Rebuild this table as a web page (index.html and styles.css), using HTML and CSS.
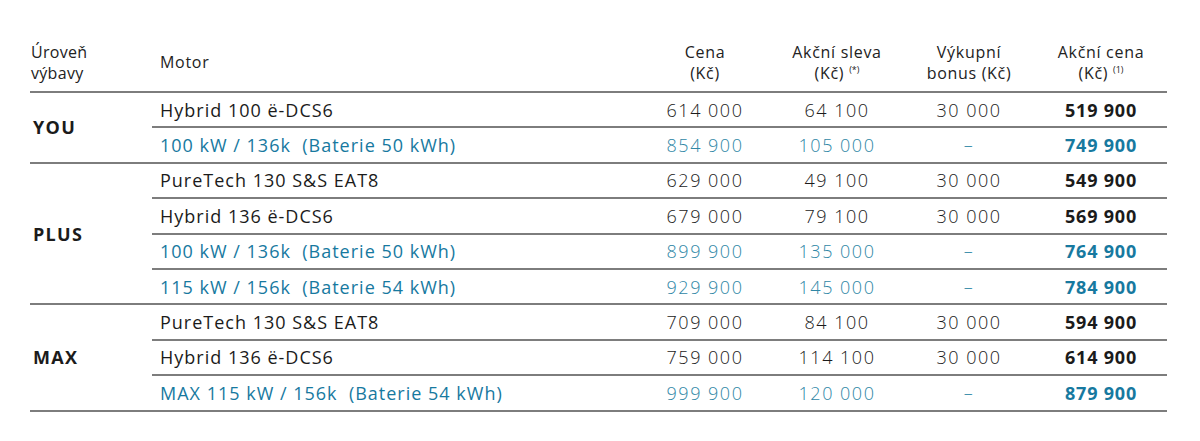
FILE: index.html
```html
<!DOCTYPE html>
<html lang="cs">
<head>
<meta charset="utf-8">
<link rel="stylesheet" href="styles.css">
</head>
<body>
<table class="prices">
  <colgroup>
    <col class="c-level"><col class="c-motor"><col class="c-num"><col class="c-num"><col class="c-num"><col class="c-num">
  </colgroup>
  <thead>
    <tr>
      <th class="level">Úroveň<br>výbavy</th>
      <th class="motor">Motor</th>
      <th>Cena<br>(Kč)</th>
      <th>Akční sleva<br>(Kč) <sup>(*)</sup></th>
      <th>Výkupní<br>bonus (Kč)</th>
      <th>Akční cena<br>(Kč) <sup>(1)</sup></th>
    </tr>
  </thead>
  <tbody>
    <tr>
      <td class="level" rowspan="2">YOU</td>
      <td class="motor">Hybrid 100 ë-DCS6</td>
      <td class="num">614 000</td><td class="num">64 100</td><td class="num">30 000</td><td class="num final">519 900</td>
    </tr>
    <tr class="ev group-end">
      <td class="motor">100 kW / 136k&nbsp; (Baterie 50 kWh)</td>
      <td class="num">854 900</td><td class="num">105 000</td><td class="num">–</td><td class="num final">749 900</td>
    </tr>
    <tr>
      <td class="level" rowspan="4">PLUS</td>
      <td class="motor">PureTech 130 S&amp;S EAT8</td>
      <td class="num">629 000</td><td class="num">49 100</td><td class="num">30 000</td><td class="num final">549 900</td>
    </tr>
    <tr>
      <td class="motor">Hybrid 136 ë-DCS6</td>
      <td class="num">679 000</td><td class="num">79 100</td><td class="num">30 000</td><td class="num final">569 900</td>
    </tr>
    <tr class="ev">
      <td class="motor">100 kW / 136k&nbsp; (Baterie 50 kWh)</td>
      <td class="num">899 900</td><td class="num">135 000</td><td class="num">–</td><td class="num final">764 900</td>
    </tr>
    <tr class="ev group-end">
      <td class="motor">115 kW / 156k&nbsp; (Baterie 54 kWh)</td>
      <td class="num">929 900</td><td class="num">145 000</td><td class="num">–</td><td class="num final">784 900</td>
    </tr>
    <tr>
      <td class="level" rowspan="3">MAX</td>
      <td class="motor">PureTech 130 S&amp;S EAT8</td>
      <td class="num">709 000</td><td class="num">84 100</td><td class="num">30 000</td><td class="num final">594 900</td>
    </tr>
    <tr>
      <td class="motor">Hybrid 136 ë-DCS6</td>
      <td class="num">759 000</td><td class="num">114 100</td><td class="num">30 000</td><td class="num final">614 900</td>
    </tr>
    <tr class="ev group-end">
      <td class="motor">MAX 115 kW / 156k&nbsp; (Baterie 54 kWh)</td>
      <td class="num">999 900</td><td class="num">120 000</td><td class="num">–</td><td class="num final">879 900</td>
    </tr>
  </tbody>
</table>
</body>
</html>
```

FILE: styles.css
```css
html, body {
  margin: 0;
  background: #ffffff;
}
body {
  padding: 40px 33px 0 30px;
  font-family: "Open Sans", "Liberation Sans", sans-serif;
  color: #1b1b1b;
}
.prices {
  width: 1137px;
  border-collapse: collapse;
  table-layout: fixed;
}
.c-level { width: 122px; }
.c-motor { width: 487px; }
.c-num { width: 132px; }

.prices th {
  font-weight: 400;
  font-size: 16px;
  line-height: 21px;
  letter-spacing: 0.7px;
  text-align: center;
  vertical-align: middle;
  padding: 0 0 6px;
  height: 45px;
  border-bottom: 2px solid #7d7d7d;
  color: #222;
}
.prices th.level {
  text-align: left;
  padding-left: 1px;
  letter-spacing: 0.3px;
}
.prices th.motor {
  text-align: left;
  padding-left: 8px;
}
.prices sup {
  font-size: 9px;
  letter-spacing: 0;
  vertical-align: 6px;
  line-height: 0;
}

.prices td {
  height: 33.4px;
  padding: 0;
  font-size: 18px;
  line-height: 22px;
  vertical-align: middle;
  border-bottom: 2px solid #7d7d7d;
}
.prices td.level {
  font-weight: 700;
  padding-left: 3px;
  letter-spacing: 1.3px;
}
.prices td.motor {
  padding-left: 8px;
  white-space: nowrap;
  letter-spacing: 1px;
}
.prices td.num {
  text-align: center;
  font-weight: 300;
  letter-spacing: 1.5px;
}
.prices td.num.final {
  font-weight: 700;
  letter-spacing: 0.8px;
}
.prices tr.ev td {
  color: #17799f;
}
.prices tr.ev td.num {
  color: #2f87a6;
}
.prices tr.ev td.num.final {
  color: #17799f;
}
```
